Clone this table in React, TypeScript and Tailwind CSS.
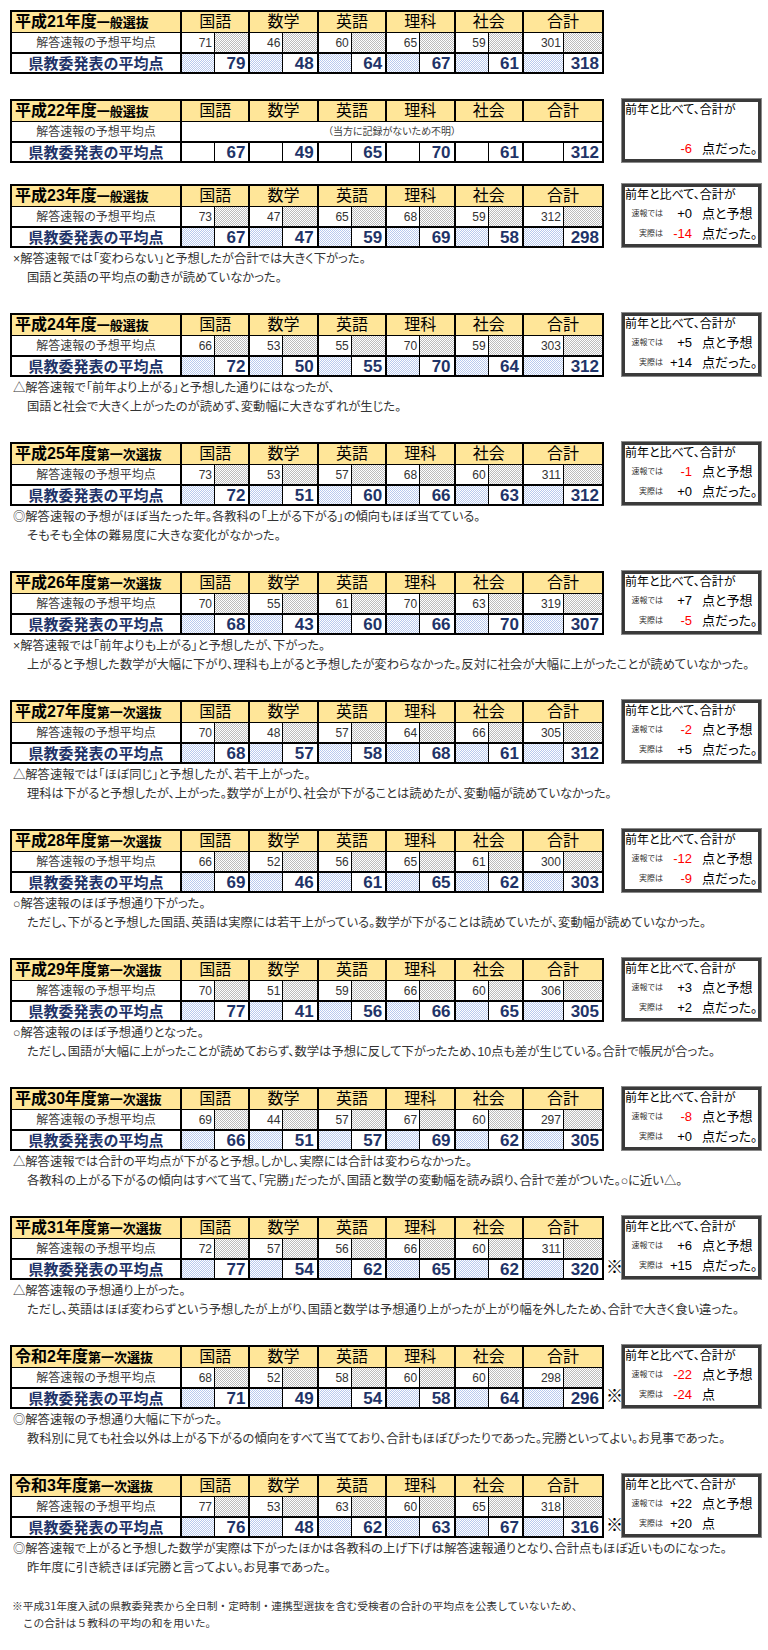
import React from "react";

type BoxT = { pv?: string; pr?: boolean; av: string; ar?: boolean; au: string };
type Blk = {
  era: string;
  kind: string;
  pred: number[] | null;
  act: number[];
  mark?: boolean;
  box?: BoxT;
  notes?: [string, string];
  mb: string;
};

const SUBJ = ["国語", "数学", "英語", "理科", "社会"];

const GRAY =
  "bg-[image:repeating-conic-gradient(#bcbcbc_0_25%,#ffffff_0_50%)] bg-[length:2px_2px]";
const BLUE =
  "bg-[image:repeating-conic-gradient(#b8caee_0_25%,#ffffff_0_50%)] bg-[length:2px_2px]";

const blocks: Blk[] = [
  { era: "平成21年度", kind: "一般選抜", pred: [71, 46, 60, 65, 59, 301], act: [79, 48, 64, 67, 61, 318], mb: "mb-[25px]" },
  { era: "平成22年度", kind: "一般選抜", pred: null, act: [67, 49, 65, 70, 61, 312], box: { av: "-6", ar: true, au: "点だった。" }, mb: "mb-[21px]" },
  {
    era: "平成23年度", kind: "一般選抜", pred: [73, 47, 65, 68, 59, 312], act: [67, 47, 59, 69, 58, 298],
    box: { pv: "+0", av: "-14", ar: true, au: "点だった。" },
    notes: ["×解答速報では「変わらない」と予想したが合計では大きく下がった。", "国語と英語の平均点の動きが読めていなかった。"], mb: "mb-[25px]",
  },
  {
    era: "平成24年度", kind: "一般選抜", pred: [66, 53, 55, 70, 59, 303], act: [72, 50, 55, 70, 64, 312],
    box: { pv: "+5", av: "+14", au: "点だった。" },
    notes: ["△解答速報で「前年より上がる」と予想した通りにはなったが、", "国語と社会で大きく上がったのが読めず、変動幅に大きなずれが生じた。"], mb: "mb-[25px]",
  },
  {
    era: "平成25年度", kind: "第一次選抜", pred: [73, 53, 57, 68, 60, 311], act: [72, 51, 60, 66, 63, 312],
    box: { pv: "-1", pr: true, av: "+0", au: "点だった。" },
    notes: ["◎解答速報の予想がほぼ当たった年。各教科の「上がる下がる」の傾向もほぼ当てている。", "そもそも全体の難易度に大きな変化がなかった。"], mb: "mb-[25px]",
  },
  {
    era: "平成26年度", kind: "第一次選抜", pred: [70, 55, 61, 70, 63, 319], act: [68, 43, 60, 66, 70, 307],
    box: { pv: "+7", av: "-5", ar: true, au: "点だった。" },
    notes: ["×解答速報では「前年よりも上がる」と予想したが、下がった。", "上がると予想した数学が大幅に下がり、理科も上がると予想したが変わらなかった。反対に社会が大幅に上がったことが読めていなかった。"], mb: "mb-[25px]",
  },
  {
    era: "平成27年度", kind: "第一次選抜", pred: [70, 48, 57, 64, 66, 305], act: [68, 57, 58, 68, 61, 312],
    box: { pv: "-2", pr: true, av: "+5", au: "点だった。" },
    notes: ["△解答速報では「ほぼ同じ」と予想したが、若干上がった。", "理科は下がると予想したが、上がった。数学が上がり、社会が下がることは読めたが、変動幅が読めていなかった。"], mb: "mb-[25px]",
  },
  {
    era: "平成28年度", kind: "第一次選抜", pred: [66, 52, 56, 65, 61, 300], act: [69, 46, 61, 65, 62, 303],
    box: { pv: "-12", pr: true, av: "-9", ar: true, au: "点だった。" },
    notes: ["○解答速報のほぼ予想通り下がった。", "ただし、下がると予想した国語、英語は実際には若干上がっている。数学が下がることは読めていたが、変動幅が読めていなかった。"], mb: "mb-[25px]",
  },
  {
    era: "平成29年度", kind: "第一次選抜", pred: [70, 51, 59, 66, 60, 306], act: [77, 41, 56, 66, 65, 305],
    box: { pv: "+3", av: "+2", au: "点だった。" },
    notes: ["○解答速報のほぼ予想通りとなった。", "ただし、国語が大幅に上がったことが読めておらず、数学は予想に反して下がったため、10点も差が生じている。合計で帳尻が合った。"], mb: "mb-[25px]",
  },
  {
    era: "平成30年度", kind: "第一次選抜", pred: [69, 44, 57, 67, 60, 297], act: [66, 51, 57, 69, 62, 305],
    box: { pv: "-8", pr: true, av: "+0", au: "点だった。" },
    notes: ["△解答速報では合計の平均点が下がると予想。しかし、実際には合計は変わらなかった。", "各教科の上がる下がるの傾向はすべて当て、「完勝」だったが、国語と数学の変動幅を読み誤り、合計で差がついた。○に近い△。"], mb: "mb-[25px]",
  },
  {
    era: "平成31年度", kind: "第一次選抜", pred: [72, 57, 56, 66, 60, 311], act: [77, 54, 62, 65, 62, 320], mark: true,
    box: { pv: "+6", av: "+15", au: "点だった。" },
    notes: ["△解答速報の予想通り上がった。", "ただし、英語はほぼ変わらずという予想したが上がり、国語と数学は予想通り上がったが上がり幅を外したため、合計で大きく食い違った。"], mb: "mb-[25px]",
  },
  {
    era: "令和2年度", kind: "第一次選抜", pred: [68, 52, 58, 60, 60, 298], act: [71, 49, 54, 58, 64, 296], mark: true,
    box: { pv: "-22", pr: true, av: "-24", ar: true, au: "点" },
    notes: ["◎解答速報の予想通り大幅に下がった。", "教科別に見ても社会以外は上がる下がるの傾向をすべて当てており、合計もほぼぴったりであった。完勝といってよい。お見事であった。"], mb: "mb-[25px]",
  },
  {
    era: "令和3年度", kind: "第一次選抜", pred: [77, 53, 63, 60, 65, 318], act: [76, 48, 62, 63, 67, 316], mark: true,
    box: { pv: "+22", av: "+20", au: "点" },
    notes: ["◎解答速報で上がると予想した数学が実際は下がったほかは各教科の上げ下げは解答速報通りとなり、合計点もほぼ近いものになった。", "昨年度に引き続きほぼ完勝と言ってよい。お見事であった。"], mb: "mb-[19px]",
  },
];

function Table({ b }: { b: Blk }) {
  return (
    <div className="w-[594px] shrink-0 border-2 border-black flex flex-col">
      <div className="flex h-[21px] border-b border-black bg-[#FFE699]">
        <div className="w-[168px] pl-[3px] flex items-center font-bold whitespace-nowrap text-black">
          <span className="text-[16px] leading-none">{b.era}</span>
          <span className="text-[13px] leading-none">{b.kind}</span>
        </div>
        {SUBJ.map((s) => (
          <div key={s} className="w-[68.4px] border-l-2 border-black flex items-center justify-center text-[16px] leading-none text-black">
            {s}
          </div>
        ))}
        <div className="flex-1 border-l-2 border-black flex items-center justify-center text-[16px] leading-none text-black">合計</div>
      </div>
      <div className="flex h-[21px] border-b-2 border-black">
        <div className="w-[168px] flex items-center justify-center text-[12px] leading-none text-[#404040]">解答速報の予想平均点</div>
        {b.pred ? (
          b.pred.map((v, i) => (
            <React.Fragment key={i}>
              <div className={`${i === 5 ? "w-[41px]" : "w-[34px]"} border-l-2 border-black flex items-center justify-end pr-[2px] text-[12px] leading-none text-[#333]`}>
                {v}
              </div>
              <div className={`${i === 5 ? "flex-1" : "w-[34.4px]"} border-l border-black ${GRAY}`} />
            </React.Fragment>
          ))
        ) : (
          <div className="flex-1 border-l-2 border-black flex items-center justify-center text-[10px] leading-none text-[#404040]">
            （当方に記録がないため不明）
          </div>
        )}
      </div>
      <div className="flex h-[18px]">
        <div className="w-[168px] flex items-center justify-center text-[15px] leading-none font-bold text-[#1F3468]">県教委発表の平均点</div>
        {b.act.map((v, i) => (
          <React.Fragment key={i}>
            <div className={`${i === 5 ? "w-[41px]" : "w-[34px]"} border-l-2 border-black ${b.pred ? BLUE : ""}`} />
            <div className={`${i === 5 ? "flex-1" : "w-[34.4px]"} border-l border-black flex items-center justify-end pr-[3px] text-[17px] leading-none font-bold text-[#1F3468]`}>
              {v}
            </div>
          </React.Fragment>
        ))}
      </div>
    </div>
  );
}

function Box({ x }: { x: BoxT }) {
  return (
    <div className="ml-[17px] mt-[-1px] w-[141px] h-[65px] border border-[#8a8a8a] bg-white">
      <div className="h-full border-[3px] border-[#3a3a3a] flex flex-col text-black">
        <div className="text-[12px] leading-[17px] whitespace-nowrap">前年と比べて、合計が</div>
        <div className="flex items-center h-[20px] whitespace-nowrap">
          {x.pv !== undefined && (
            <>
              <span className="w-[38px] text-right text-[8px] text-[#333]">速報では</span>
              <span className={`w-[29px] text-right text-[13px] ${x.pr ? "text-[#ff0000]" : ""}`}>{x.pv}</span>
              <span className="ml-[10px] text-[13px]">点と予想</span>
            </>
          )}
        </div>
        <div className="flex items-center h-[20px] whitespace-nowrap">
          <span className="w-[38px] text-right text-[8px] text-[#333]">{x.pv !== undefined ? "実際は" : ""}</span>
          <span className={`w-[29px] text-right text-[13px] ${x.ar ? "text-[#ff0000]" : ""}`}>{x.av}</span>
          <span className="ml-[10px] text-[13px]">{x.au}</span>
        </div>
      </div>
    </div>
  );
}

function Block({ b }: { b: Blk }) {
  return (
    <div className={`flex flex-col ${b.mb}`}>
      <div className="flex items-start">
        <Table b={b} />
        {b.box && (
          <div className="w-0 relative">
            {b.mark && (
              <span className="absolute left-[2px] top-[42px] text-[17px] leading-[20px] text-black">※</span>
            )}
          </div>
        )}
        {b.box && <Box x={b.box} />}
      </div>
      {b.notes && (
        <div className="pt-[2px] text-[12.3px] leading-[19px] text-[#333] whitespace-nowrap">
          <div className="pl-[3px]">{b.notes[0]}</div>
          <div className="pl-[17px]">{b.notes[1]}</div>
        </div>
      )}
    </div>
  );
}

export default function App() {
  return (
    <div className="w-[768px] h-[1650px] bg-white pt-[10px] pl-[10px] font-['Liberation_Sans','Noto_Sans_CJK_JP',sans-serif] [font-feature-settings:'palt']">
      {blocks.map((b, i) => (
        <Block key={i} b={b} />
      ))}
      <div className="text-[10.75px] leading-[17px] text-[#333] whitespace-nowrap [font-feature-settings:normal] font-['Noto_Sans_CJK_JP',sans-serif]">
        <div className="pl-[2px]">※平成31年度入試の県教委発表から全日制・定時制・連携型選抜を含む受検者の合計の平均点を公表していないため、</div>
        <div className="pl-[2px]">　この合計は５教科の平均の和を用いた。</div>
      </div>
    </div>
  );
}
